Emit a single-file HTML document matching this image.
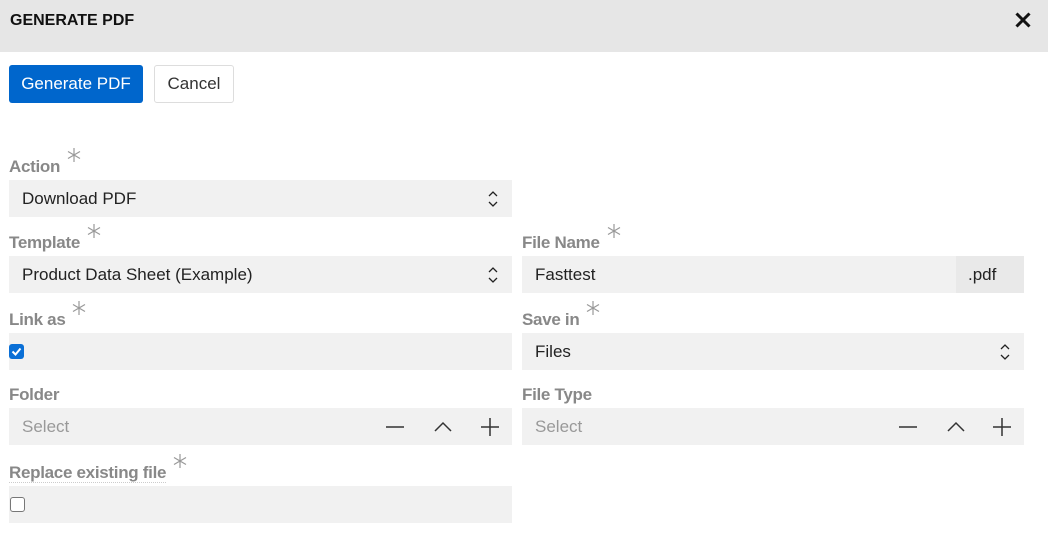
<!DOCTYPE html>
<html><head><style>
*{box-sizing:border-box;margin:0;padding:0}
body{width:1048px;height:541px;background:#fff;font-family:"Liberation Sans",sans-serif;position:relative;overflow:hidden}
.hdr{position:absolute;left:0;top:0;width:1048px;height:52px;background:#e6e6e6}
.hdr .t{position:absolute;left:10px;top:12px;font-size:16px;font-weight:bold;color:#111}
.x{position:absolute;left:1015px;top:12px}
.btn{position:absolute;top:65px;height:38px;border-radius:3px;font-size:17px;line-height:38px;text-align:center}
.b1{left:9px;width:134px;background:#0066cc;color:#fff}
.b2{left:154px;width:80px;border:1px solid #ddd;color:#333;line-height:36px}
.lbl{position:absolute;font-size:17px;color:#888;font-weight:bold;letter-spacing:-0.3px;white-space:nowrap}
.lbl svg{position:relative;top:-9px;margin-left:6px}
.f{position:absolute;background:#f1f1f1;height:37px;font-size:17px;color:#222;line-height:37px;padding-left:13px}
.ph{color:#999}
.arr{position:absolute;right:14px;top:10px}
.ic{position:absolute;top:10px}
.cb{position:absolute;left:0;top:11px;width:15px;height:15px;border-radius:3px}
.cb svg{display:block}
</style></head><body>
<div class="hdr"><div class="t">GENERATE PDF</div>
<svg class="x" width="16" height="16" viewBox="0 0 16 16"><path d="M1.5 1.5L14.5 14.5M14.5 1.5L1.5 14.5" stroke="#111" stroke-width="3"/></svg></div>
<div class="btn b1">Generate PDF</div>
<div class="btn b2">Cancel</div>

<div class="lbl" style="left:9px;top:156px">Action<svg width="16" height="16" viewBox="0 0 16 16"><path d="M8 1V15M2 4.5L14 11.5M14 4.5L2 11.5" stroke="#999" stroke-width="1.2"/></svg></div>
<div class="f" style="left:9px;top:180px;width:503px">Download PDF<svg class="arr" width="10" height="18" viewBox="0 0 10 18"><path d="M1 6L5 2L9 6M1 12L5 16L9 12" stroke="#222" fill="none" stroke-width="1.3"/></svg></div>

<div class="lbl" style="left:9px;top:232px">Template<svg width="16" height="16" viewBox="0 0 16 16"><path d="M8 1V15M2 4.5L14 11.5M14 4.5L2 11.5" stroke="#999" stroke-width="1.2"/></svg></div>
<div class="f" style="left:9px;top:256px;width:503px">Product Data Sheet (Example)<svg class="arr" width="10" height="18" viewBox="0 0 10 18"><path d="M1 6L5 2L9 6M1 12L5 16L9 12" stroke="#222" fill="none" stroke-width="1.3"/></svg></div>

<div class="lbl" style="left:522px;top:232px">File Name<svg width="16" height="16" viewBox="0 0 16 16"><path d="M8 1V15M2 4.5L14 11.5M14 4.5L2 11.5" stroke="#999" stroke-width="1.2"/></svg></div>
<div class="f" style="left:522px;top:256px;width:502px">Fasttest<div style="position:absolute;right:0;top:0;width:68px;height:37px;background:#e9e9e9;padding-left:12px">.pdf</div></div>

<div class="lbl" style="left:9px;top:309px">Link as<svg width="16" height="16" viewBox="0 0 16 16"><path d="M8 1V15M2 4.5L14 11.5M14 4.5L2 11.5" stroke="#999" stroke-width="1.2"/></svg></div>
<div class="f" style="left:9px;top:333px;width:503px;padding:0"><div class="cb" style="background:#0a6fd6"><svg width="15" height="15" viewBox="0 0 15 15"><path d="M3.5 7.5L6.5 10.5L11.5 4.5" stroke="#fff" stroke-width="2" fill="none"/></svg></div></div>

<div class="lbl" style="left:522px;top:309px">Save in<svg width="16" height="16" viewBox="0 0 16 16"><path d="M8 1V15M2 4.5L14 11.5M14 4.5L2 11.5" stroke="#999" stroke-width="1.2"/></svg></div>
<div class="f" style="left:522px;top:333px;width:502px">Files<svg class="arr" width="10" height="18" viewBox="0 0 10 18"><path d="M1 6L5 2L9 6M1 12L5 16L9 12" stroke="#222" fill="none" stroke-width="1.3"/></svg></div>

<div class="lbl" style="left:9px;top:385px">Folder</div>
<div class="f" style="left:9px;top:408px;width:503px"><span class="ph">Select</span>
<svg class="ic" style="left:377px" width="18" height="18"><path d="M0 9H18" stroke="#333" stroke-width="1.5"/></svg>
<svg class="ic" style="left:425px" width="18" height="18"><path d="M1 13L9 5L17 13" stroke="#333" stroke-width="1.5" fill="none"/></svg>
<svg class="ic" style="left:472px" width="18" height="18"><path d="M0 9H18M9 0V18" stroke="#333" stroke-width="1.5"/></svg></div>

<div class="lbl" style="left:522px;top:385px">File Type</div>
<div class="f" style="left:522px;top:408px;width:502px"><span class="ph">Select</span>
<svg class="ic" style="left:377px" width="18" height="18"><path d="M0 9H18" stroke="#333" stroke-width="1.5"/></svg>
<svg class="ic" style="left:425px" width="18" height="18"><path d="M1 13L9 5L17 13" stroke="#333" stroke-width="1.5" fill="none"/></svg>
<svg class="ic" style="left:471px" width="18" height="18"><path d="M0 9H18M9 0V18" stroke="#333" stroke-width="1.5"/></svg></div>

<div class="lbl" style="left:9px;top:462px"><span style="border-bottom:1px dotted #ccc">Replace existing file</span><svg width="16" height="16" viewBox="0 0 16 16"><path d="M8 1V15M2 4.5L14 11.5M14 4.5L2 11.5" stroke="#999" stroke-width="1.2"/></svg></div>
<div class="f" style="left:9px;top:486px;width:503px;padding:0"><div class="cb" style="left:1px;border:1.5px solid #777;background:#fff"></div></div>
</body></html>
